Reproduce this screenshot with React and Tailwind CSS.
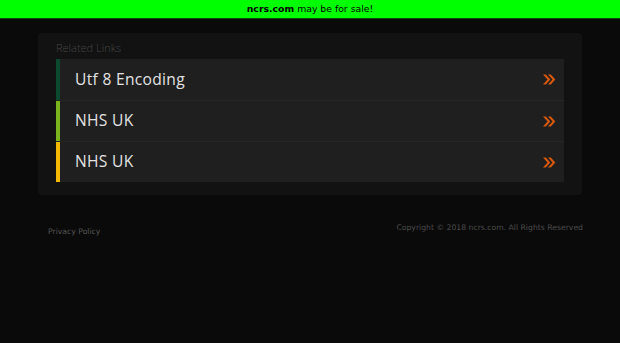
export default function App() {
  const rows = [
    { label: "Utf 8 Encoding", color: "bg-[#0b4a2e]" },
    { label: "NHS UK", color: "bg-[#7ab51d]" },
    { label: "NHS UK", color: "bg-[#f5b800]" },
  ];
  const Chev = () => (
    <svg width="14" height="11" viewBox="0 0 14 11" className="shrink-0">
      <path d="M1 0.5 L5.5 5.5 L1 10.5 L3.8 10.5 L8.3 5.5 L3.8 0.5 Z" fill="#d9580e" />
      <path d="M6 0.5 L10.5 5.5 L6 10.5 L8.8 10.5 L13.3 5.5 L8.8 0.5 Z" fill="#d9580e" />
    </svg>
  );
  return (
    <div className="w-[620px] h-[343px] bg-[#0a0a0a] overflow-hidden" style={{ fontFamily: '"Open Sans", sans-serif' }}>
      <div className="h-[19px] bg-[#00ff00] border-b border-[#0a4a0a] flex items-center justify-center text-[9.3px] text-black" style={{ fontFamily: '"DejaVu Sans", sans-serif' }}>
        <span className="font-bold">ncrs.com</span>
        <span className="ml-[3px]">may be for sale!</span>
      </div>
      <div className="mx-[38px] mt-[14px] bg-[#121212] rounded-[4px] pt-[6px] pb-[13px] px-[18px]">
        <div className="text-[11px] text-[#444] font-light leading-[18px] mb-[2px]">Related Links</div>
        <div className="flex flex-col">
          {rows.map((r, i) => (
            <div key={i} className={`h-[41px] flex items-center bg-[#1f1f1f] ${i > 0 ? "border-t border-[#262626]" : ""}`}>
              <div className={`w-[4px] self-stretch ${r.color}`} />
              <div className="flex-1 pl-[15px] text-[15.6px] text-[#e2e2e2] tracking-[0.3px]">{r.label}</div>
              <div className="pr-[8px] flex items-center"><Chev /></div>
            </div>
          ))}
        </div>
      </div>
      <div className="mx-[36px] mt-[27px] flex justify-between items-start text-[7.7px] text-[#555]" style={{ fontFamily: '"DejaVu Sans", sans-serif' }}>
        <div className="pl-[12px] mt-[4px]">Privacy Policy</div>
        <div className="text-[#4a4a4a] pr-[1px]">Copyright © 2018 ncrs.com. All Rights Reserved</div>
      </div>
    </div>
  );
}
